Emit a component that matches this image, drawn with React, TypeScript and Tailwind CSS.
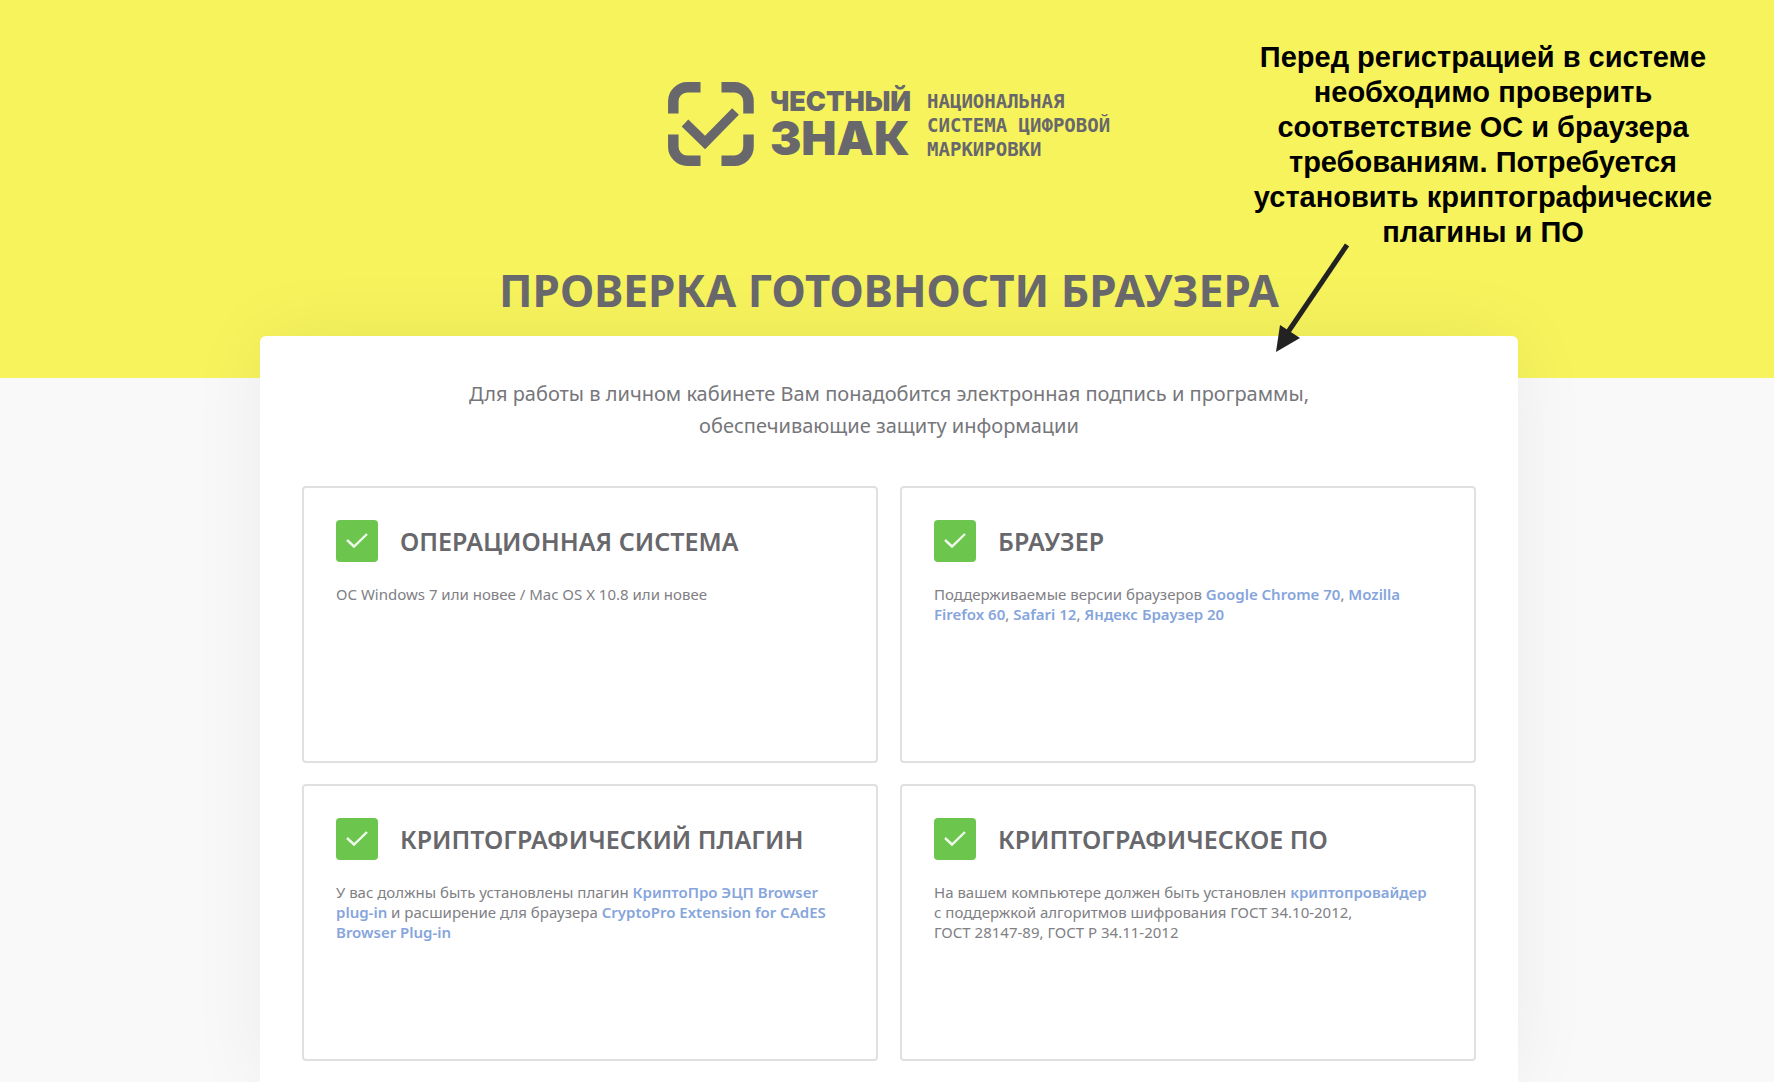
import type { ReactNode } from "react";

function LogoMark() {
  return (
    <svg viewBox="0 0 86 84" className="h-[84px] w-[86px]" fill="none" stroke="#67676c" strokeWidth="10.5" aria-hidden="true">
      <path d="M5.3 31.5V19.5A14 14 0 0 1 19.5 5.3H32.5" />
      <path d="M53.5 5.3H66.5A14 14 0 0 1 80.5 19.5V31.5" />
      <path d="M80.5 52.5V64.5A14 14 0 0 1 66.5 78.7H53.5" />
      <path d="M32.5 78.7H19.5A14 14 0 0 1 5.3 64.5V52.5" />
      <path d="M17 41L37 60.5L67.5 29.5" strokeWidth="9.5" />
    </svg>
  );
}

function Logo() {
  return (
    <a href="#" aria-label="Честный знак" className="flex items-center text-[#67676c]">
      <LogoMark />
      <span className="ml-4 flex flex-col pt-px font-['Inter',sans-serif] font-black">
        <span className="text-[27px] leading-[26px]">ЧЕСТНЫЙ</span>
        <span className="text-[47px] leading-[46px]">ЗНАК</span>
      </span>
      <span className="ml-4 pt-px font-['DejaVu_Sans_Mono',monospace] text-[19px] leading-6 font-bold">
        НАЦИОНАЛЬНАЯ
        <br />
        СИСТЕМА ЦИФРОВОЙ
        <br />
        МАРКИРОВКИ
      </span>
    </a>
  );
}

function Note() {
  return (
    <aside className="absolute top-10 right-[51px] w-[480px] text-center font-['Liberation_Sans',sans-serif] text-[29px] leading-[35px] font-bold text-black">
      Перед регистрацией в системе
      <br />
      необходимо проверить
      <br />
      соответствие ОС и браузера
      <br />
      требованиям. Потребуется
      <br />
      установить криптографические
      <br />
      плагины и ПО
      <svg viewBox="0 0 73 110" className="absolute top-[203px] left-[33px] h-[110px] w-[73px]" aria-hidden="true">
        <path d="M71 2L10 92" stroke="#222" strokeWidth="5" fill="none" />
        <path d="M0 109L4 82L24 95Z" fill="#222" />
      </svg>
    </aside>
  );
}

function Term({ children }: { children: ReactNode }) {
  return (
    <a href="#" className="font-semibold text-[#86a5dc]">
      {children}
    </a>
  );
}

function Card({ title, children }: { title: string; children: ReactNode }) {
  return (
    <section className="min-h-[277px] rounded border-2 border-[#e0e0e0] px-8 py-8">
      <div className="flex items-center gap-[22px]">
        <span className="flex size-[42px] shrink-0 items-center justify-center rounded bg-[#6cc54d]">
          <svg viewBox="0 0 22 16" className="h-4 w-[22px]" fill="none" stroke="#f0faec" strokeWidth="2.4" aria-hidden="true">
            <path d="M1 7L8 13.5L21 1" />
          </svg>
        </span>
        <h2 className="text-[25px] leading-8 font-semibold whitespace-nowrap text-[#67676c]">{title}</h2>
      </div>
      <p className="mt-[22px] text-[15px] leading-5 text-[#808085]">{children}</p>
    </section>
  );
}

export default function App() {
  return (
    <div className="relative min-h-screen bg-[#f9f9f9] font-['Noto_Sans',sans-serif]">
      <header className="flex h-[378px] flex-col items-center bg-[#f6f35d] pt-[82px] pl-1">
        <Logo />
        <h1 className="mt-24 text-[44px] leading-[56px] font-bold text-[#67676c]">ПРОВЕРКА ГОТОВНОСТИ БРАУЗЕРА</h1>
      </header>
      <div className="-mt-[42px] pl-1">
        <main className="mx-auto w-full max-w-[1258px] rounded-t-md bg-white px-[42px] pt-[42px] pb-[21px] shadow-[0_0_80px_rgba(0,0,0,0.06)]">
          <p className="text-center text-xl leading-8 text-[#76767b]">
            Для работы в личном кабинете Вам понадобится электронная подпись и программы,
            <br />
            обеспечивающие защиту информации
          </p>
          <div className="mt-11 grid grid-cols-2 gap-x-[22px] gap-y-[21px]">
            <Card title="ОПЕРАЦИОННАЯ СИСТЕМА">ОС Windows 7 или новее / Mac OS X 10.8 или новее</Card>
            <Card title="БРАУЗЕР">
              Поддерживаемые версии браузеров <Term>Google Chrome 70</Term>, <Term>Mozilla</Term>
              <br />
              <Term>Firefox 60</Term>, <Term>Safari 12</Term>, <Term>Яндекс Браузер 20</Term>
            </Card>
            <Card title="КРИПТОГРАФИЧЕСКИЙ ПЛАГИН">
              У вас должны быть установлены плагин <Term>КриптоПро ЭЦП Browser
              <br />
              plug-in</Term> и расширение для браузера <Term>CryptoPro Extension for CAdES
              <br />
              Browser Plug-in</Term>
            </Card>
            <Card title="КРИПТОГРАФИЧЕСКОЕ ПО">
              На вашем компьютере должен быть установлен <Term>криптопровайдер</Term>
              <br />
              с поддержкой алгоритмов шифрования ГОСТ 34.10-2012,
              <br />
              ГОСТ 28147-89, ГОСТ Р 34.11-2012
            </Card>
          </div>
        </main>
      </div>
      <Note />
    </div>
  );
}
